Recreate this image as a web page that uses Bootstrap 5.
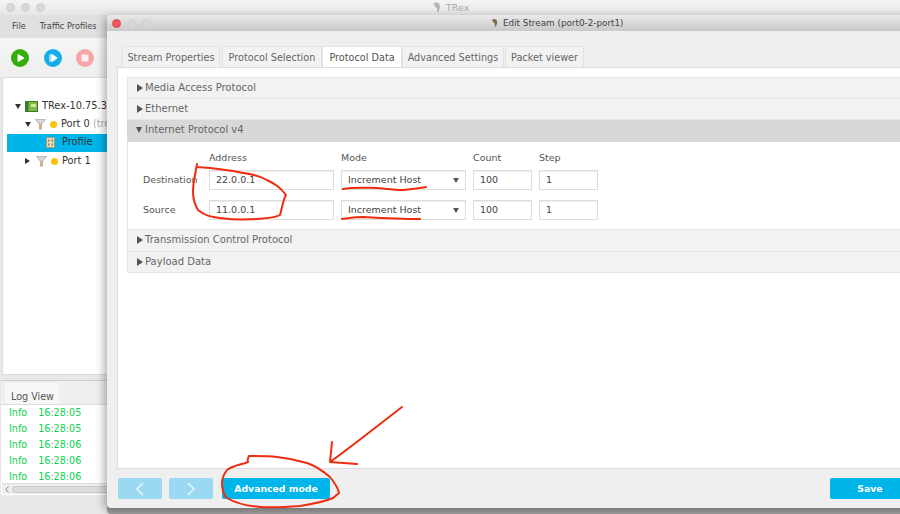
<!DOCTYPE html>
<html lang="en"><head><meta charset="utf-8"><title>TRex</title>
<link rel="stylesheet" href="https://cdn.jsdelivr.net/npm/bootstrap@5.3.0/dist/css/bootstrap.min.css">
<style>
html,body{margin:0;height:514px;overflow:hidden}
body{font-family:"DejaVu Sans",sans-serif;font-size:10px;color:#555;background:#e8e8e8;position:relative;width:900px}
.mainwin{height:514px;background:#e8e8e8;display:flex;flex-direction:column}
.mtitle{height:15px;background:linear-gradient(#f4f4f4,#e6e6e6);display:flex;align-items:center;padding-left:6px;gap:6px;position:relative;color:#aaa;flex:none;font-size:9.5px}
.lamp{width:9px;height:9px;border-radius:50%;background:#d8d8d8;border:1px solid #cfcfcf;flex:none}
.lamp.redl{background:#f4585a;border-color:#e04a4c}
.mtitle-text{position:absolute;left:432px;top:1px;display:flex;gap:5px;align-items:center;line-height:13px}
.menubar{height:23px;background:#e0e0e0;display:flex;align-items:center;padding-left:12px;gap:14px;font-size:8.2px;color:#444;flex:none}
.toolbar{height:39px;background:linear-gradient(#f6f6f6,#eeeeee);display:flex;align-items:center;padding-left:11px;gap:14.500px;flex:none}
.tool{width:18px;height:18px;flex:none;display:block}
.treepane{height:298px;background:#fff;margin:0 0 0 2px;border:1px solid #ddd;padding-top:19px;flex:none;font-size:9.8px;color:#333}
.trow{height:18.3px;display:flex;align-items:center;white-space:nowrap;overflow:hidden;gap:4px}
.trow.sel{background:#00b5ea;margin-left:4px}
.lv0{padding-left:12px}.lv1{padding-left:22px}.lv2{padding-left:39px;gap:7px}
.mut{color:#aaa}
.arr{width:0;height:0;border-style:solid;flex:none}
.arr.down{border-width:5px 3.500px 0;border-color:#333 transparent transparent}
.arr.right{border-width:3.500px 0 3.500px 5px;border-color:transparent transparent transparent #333;margin-right:2px}
.dotg{width:7px;height:7px;border-radius:50%;background:#fdc00f;flex:none}
.logpane{height:115px;margin:5px 0 0 1px;background:#fff;display:flex;flex-direction:column;flex:none;border-top:1px solid #ccc;font-size:9.600px}
.logtabs{height:24px;background:#efefef;border-bottom:1px solid #ddd;padding-left:4px;flex:none;display:flex;align-items:flex-end}
.logtab{background:#f7f7f7;height:21px;padding:9px 6px 0;width:54px;white-space:nowrap;color:#555;line-height:1.1}
.logrow{height:16px;line-height:16px;color:#0ccf4f;padding-left:8px;display:flex;gap:11px;flex:none}
.logbody{height:78px;overflow:hidden;flex:none}
.hscroll{height:11px;background:#eee;border-top:1px solid #ddd;flex:none;margin-left:1px;display:flex;align-items:center;gap:3px;padding-left:3px}
.hthumb{height:7px;flex:1;background:#ddd;border:1px solid #c8c8c8;border-radius:4px}
.dialog{position:absolute;left:107px;top:15px;width:803px;height:493px;background:#efefef;display:flex;flex-direction:column;border-radius:4px 0 0 4px;box-shadow:-3px 2px 8px rgba(0,0,0,.3),0 6px 0 #9d9d9d}
.dtitle{height:16px;background:linear-gradient(#e9e9e9,#c9c9c9);display:flex;align-items:center;padding-left:5px;gap:6px;position:relative;flex:none;border-radius:4px 0 0 0;color:#444;font-size:8.800px}
.dtitle-text{position:absolute;left:384px;top:1px;display:flex;gap:5px;align-items:center;line-height:14px}
.tabstrip{margin-top:15px;padding-left:15px;display:flex;height:21px;flex:none;align-items:flex-end;font-size:9.700px}
.tabby{height:21px;line-height:21px;background:#f2f2f2;border:1px solid #e2e2e2;border-bottom:0;border-radius:2px 2px 0 0;white-space:nowrap;color:#666;text-align:center}
.tabby.on{background:#fff;color:#555}
.tw1{width:98px;margin-right:2px}.tw2{width:100px}.tw3{width:80px}.tw4{width:102px;margin-right:1px}.tw5{width:79px}
.tabpage{height:402px;margin-left:10px;background:#fff;border:1px solid #ddd;padding:9px 0 0 9px;flex:none}
.acc{border:1px solid #e6e6e6;border-top:0;height:21.500px;background:#f2f2f2;display:flex;align-items:center;padding-left:9px;gap:2px;color:#666;line-height:1}
.acc.first{border-top:1px solid #e6e6e6}
.acc.open{background:#d8d8d8;border-color:#d8d8d8}
.acc .arr.down{border-width:6px 3.500px 0;border-color:#555 transparent transparent;margin-left:-1px;margin-right:1px}
.acc .arr.right{border-width:4px 0 4px 6px;border-color:transparent transparent transparent #555;margin-right:0}
.ipform{height:88.500px;border:1px solid #e6e6e6;border-top:0;display:grid;grid-template-columns:66px 132px 132px 66px 60px;padding:9.500px 0 0 15px;grid-template-rows:14px 30px 30px;align-items:center;font-size:9.500px}
.fld{height:20px;background:#fff;border:1px solid #ddd;box-shadow:inset 0 1px 1px #eee;padding:0 6px;color:#444;display:flex;align-items:center;justify-content:space-between}
.fld .arr.down{border-color:#555 transparent transparent}
.wa{width:125px}.wc{width:59px}
.foot{flex:1;display:flex;align-items:center;padding-left:11px;gap:7px}
.navb{width:44px;height:21px;background:#9bd9f3;border:0;border-radius:2px;padding:0;display:flex;align-items:center;justify-content:center}
.actb{height:21px;background:#00b5ea;border:0;border-radius:2px;color:#fff;font-weight:700;font-size:9.300px;padding:0}
.adv{width:108px;margin-left:2px}
.sav{width:80px;margin-left:auto}
.ink{position:absolute;left:0;top:0;width:900px;height:514px;pointer-events:none}
</style></head>
<body>
<div class="mainwin">
  <div class="mtitle"><span class="lamp"></span><span class="lamp"></span><span class="lamp"></span>
    <span class="mtitle-text"><svg width="9" height="11" viewBox="0 0 9 11"><path d="M1 2 3 0.500 7 1 8 5 6.500 10 5 10 5 6 3 5 2.500 3Z" fill="#b5b5b5"/></svg>TRex</span></div>
  <div class="menubar"><span>File</span><span>Traffic Profiles</span></div>
  <div class="toolbar">
    <svg class="tool" viewBox="0 0 18 18"><circle cx="9" cy="9" r="9" fill="#36ad0c"/><path d="M6.800 6a.5.5 0 0 1 .8-.4l5 3a.5.5 0 0 1 0 .8l-5 3a.5.5 0 0 1-.8-.4Z" fill="#fff" stroke="#fff" stroke-width=".6"/></svg>
    <svg class="tool" viewBox="0 0 18 18"><circle cx="9" cy="9" r="9" fill="#12aeea"/><rect x="5" y="5.500" width="2" height="7" fill="#a5e0f7"/><path d="M7.500 5 13.500 9 7.500 13Z" fill="#fff" stroke="#fff" stroke-width=".6" stroke-linejoin="round"/></svg>
    <svg class="tool" viewBox="0 0 18 18"><circle cx="9" cy="9" r="9" fill="#f6a5a8"/><rect x="5.500" y="5.500" width="7" height="7" rx="1" fill="#fdeeee"/></svg>
  </div>
  <div class="treepane">
    <div class="trow lv0"><span class="arr down"></span><svg width="13" height="11" viewBox="0 0 13 11"><rect x=".5" y=".5" width="12" height="10" fill="#7fb94a" stroke="#3d7a2c"/><rect x=".5" y=".5" width="3" height="10" fill="#3d7a2c"/><rect x="6" y="3" width="5" height="3" fill="#cfe59a"/></svg><span>TRex-10.75.3</span></div>
    <div class="trow lv1"><span class="arr down"></span><svg width="11" height="12" viewBox="0 0 11 12"><path d="M.5 1.500h10L7 6H4Z" fill="#d8d8d8" stroke="#a5a5a5" stroke-width=".7"/><path d="M4 6h3v5.500H4z" fill="#c9b38a"/></svg><span class="dotg"></span><span>Port 0 <span class="mut">(tre</span></span></div>
    <div class="trow sel lv2"><svg width="9" height="11" viewBox="0 0 9 11"><rect x=".5" y=".5" width="8" height="10" fill="#e6dcc0" stroke="#a89b78"/><path d="M2 2.500h1.500v2H2zM5.500 2.500H7v2H5.500zM2 6.500h1.500v2H2zM5.500 6.500H7v2H5.500z" fill="#8c7f5f"/></svg><span>Profile</span></div>
    <div class="trow lv1"><span class="arr right"></span><svg width="11" height="12" viewBox="0 0 11 12"><path d="M.5 1.500h10L7 6H4Z" fill="#d8d8d8" stroke="#a5a5a5" stroke-width=".7"/><path d="M4 6h3v5.500H4z" fill="#c9b38a"/></svg><span class="dotg"></span><span>Port 1</span></div>
  </div>
  <div class="logpane">
    <div class="logtabs"><div class="logtab">Log View</div></div>
    <div class="logbody">
      <div class="logrow"><span>Info</span><span>16:28:05</span></div>
      <div class="logrow"><span>Info</span><span>16:28:05</span></div>
      <div class="logrow"><span>Info</span><span>16:28:06</span></div>
      <div class="logrow"><span>Info</span><span>16:28:06</span></div>
      <div class="logrow"><span>Info</span><span>16:28:06</span></div>
    </div>
    <div class="hscroll"><svg width="4" height="7" viewBox="0 0 4 7"><path d="M3.500 .5 .8 3.500l2.700 3" fill="none" stroke="#888"/></svg><span class="hthumb"></span></div>
  </div>
</div>

<div class="dialog">
  <div class="dtitle"><span class="lamp redl"></span><span class="lamp"></span><span class="lamp"></span>
    <span class="dtitle-text"><svg width="7" height="10" viewBox="0 0 9 11"><path d="M1 2 3 0.500 7 1 8 5 6.500 10 5 10 5 6 3 5 2.500 3Z" fill="#7a6a45"/></svg>Edit Stream (port0-2-port1)</span></div>
  <div class="tabstrip">
    <div class="tabby tw1">Stream Properties</div><div class="tabby tw2">Protocol Selection</div><div class="tabby on tw3">Protocol Data</div><div class="tabby tw4">Advanced Settings</div><div class="tabby tw5">Packet viewer</div>
  </div>
  <div class="tabpage">
    <div class="acc first"><span class="arr right"></span>Media Access Protocol</div>
    <div class="acc"><span class="arr right"></span>Ethernet</div>
    <div class="acc open"><span class="arr down"></span>Internet Protocol v4</div>
    <div class="ipform">
      <span></span><span>Address</span><span>Mode</span><span>Count</span><span>Step</span>
      <span>Destination</span><div class="fld wa">22.0.0.1</div><div class="fld wa">Increment Host<span class="arr down"></span></div><div class="fld wc">100</div><div class="fld wc">1</div>
      <span>Source</span><div class="fld wa">11.0.0.1</div><div class="fld wa">Increment Host<span class="arr down"></span></div><div class="fld wc">100</div><div class="fld wc">1</div>
    </div>
    <div class="acc"><span class="arr right"></span>Transmission Control Protocol</div>
    <div class="acc"><span class="arr right"></span>Payload Data</div>
  </div>
  <div class="foot">
    <button class="btn navb" type="button" aria-label="Previous"><svg width="10" height="14" viewBox="0 0 10 14"><path d="M8 1 2 7l6 6" fill="none" stroke="#e6f6fc" stroke-width="1.600"/></svg></button>
    <button class="btn navb" type="button" aria-label="Next"><svg width="10" height="14" viewBox="0 0 10 14"><path d="M2 1l6 6-6 6" fill="none" stroke="#e6f6fc" stroke-width="1.600"/></svg></button>
    <button class="btn actb adv" type="button">Advanced mode</button>
    <button class="btn actb sav" type="button">Save</button>
  </div>
</div>

<svg class="ink" viewBox="0 0 900 514" fill="none" stroke="#f02c10" stroke-width="2" stroke-linecap="round" stroke-linejoin="round">
  <path d="M197 164 195 175C192 190 192 200 198 210 205 216 212 217 220 218 235 220 245 220 257 219 268 218 275 218 280 215 282 208 283 200 286 195 280 187 275 184 267 180 258 175 250 174 243 173 225 169 212 168 197 167"/>
  <path d="M343 189C355 187 365 188 377 188 388 189 396 190 403 190 412 189 420 188 426 187"/>
  <path d="M342 219C350 218 356 217 363 217 382 218 402 219 420 219"/>
  <path d="M402 407C385 420 355 444 330 462M332 442 330 462 357 464"/>
  <path d="M249 456C248 458 247 460 248 462 240 465 232 466 227 470 224 474 222 478 222 483 222 490 224 495 227 498 237 504 248 506 260 507 275 508 288 507 300 506 312 504 324 502 333 498L339 493C338 487 334 482 330 477 323 471 316 466 307 463 297 460 287 458 277 457 268 456 258 456 249 456"/>
</svg>
</body></html>
